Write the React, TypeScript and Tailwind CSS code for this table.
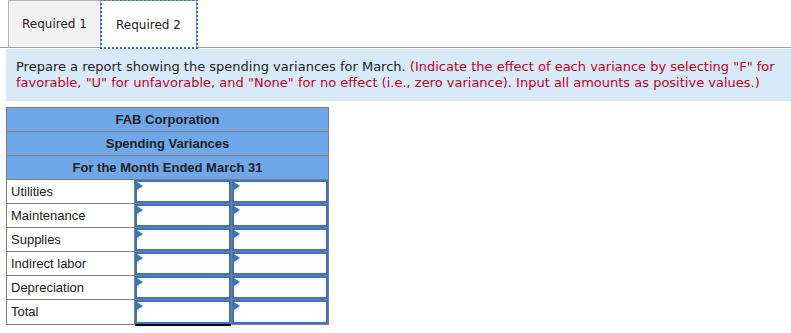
const rows = ["Utilities", "Maintenance", "Supplies", "Indirect labor", "Depreciation", "Total"];

function InputCell({ total }: { total?: boolean }) {
  return (
    <div className="relative h-full border-l border-[#7f7f7f] bg-white">
      <div
        className={`relative h-full border-2 border-[#3c72bf] ${
          total ? "shadow-[0_2px_0_0_#000]" : ""
        }`}
      >
        <span className="absolute left-0 top-0 h-0 w-0 border-y-[4px] border-l-[6px] border-y-transparent border-l-[#3c72bf]" />
      </div>
    </div>
  );
}

export default function App() {
  return (
    <div className="h-[333px] w-[791px] bg-white text-[#222]">
      <div className="flex h-[48px] items-end border-b border-[#a0a0a0] pl-2 font-['DejaVu_Sans',Verdana,sans-serif] text-[12px]">
        <div className="flex h-[47px] w-[93px] items-center justify-center border-x border-t border-[#b4b4b4] bg-[#f2f2f2]">
          Required 1
        </div>
        <div className="relative -mb-px flex h-[48px] w-[96px] items-center justify-center border-r border-t border-[#a0a0a0] bg-white outline-2 outline-dotted -outline-offset-1 outline-[#3c72bf]">
          Required 2
        </div>
      </div>

      <div className="ml-[6px] mt-px bg-[#d8eaf8] px-[10px] pb-[10px] pt-[10px] font-['DejaVu_Sans',Verdana,sans-serif] text-[13px] leading-[16px]">
        Prepare a report showing the spending variances for March.{" "}
        <span className="text-[#c8001e]">
          (Indicate the effect of each variance by selecting "F" for favorable, "U" for
          unfavorable, and "None" for no effect (i.e., zero variance). Input all amounts as
          positive values.)
        </span>
      </div>

      <div className="ml-[6px] mt-[6px] w-[323px] border border-[#7f7f7f] font-['Liberation_Sans',Arial,sans-serif] text-[13px]">
        {["FAB Corporation", "Spending Variances", "For the Month Ended March 31"].map((t) => (
          <div
            key={t}
            className="flex h-[24px] items-center justify-center border-b border-[#7f7f7f] bg-[#6fa7e9] font-bold"
          >
            {t}
          </div>
        ))}
        {rows.map((r, i) => (
          <div
            key={r}
            className={`grid h-[24px] grid-cols-[127px_97px_97px] ${
              i < rows.length - 1 ? "border-b border-[#7f7f7f]" : ""
            }`}
          >
            <div className="flex items-center pl-[4px]">{r}</div>
            <InputCell total={r === "Total"} />
            <InputCell />
          </div>
        ))}
      </div>
    </div>
  );
}
